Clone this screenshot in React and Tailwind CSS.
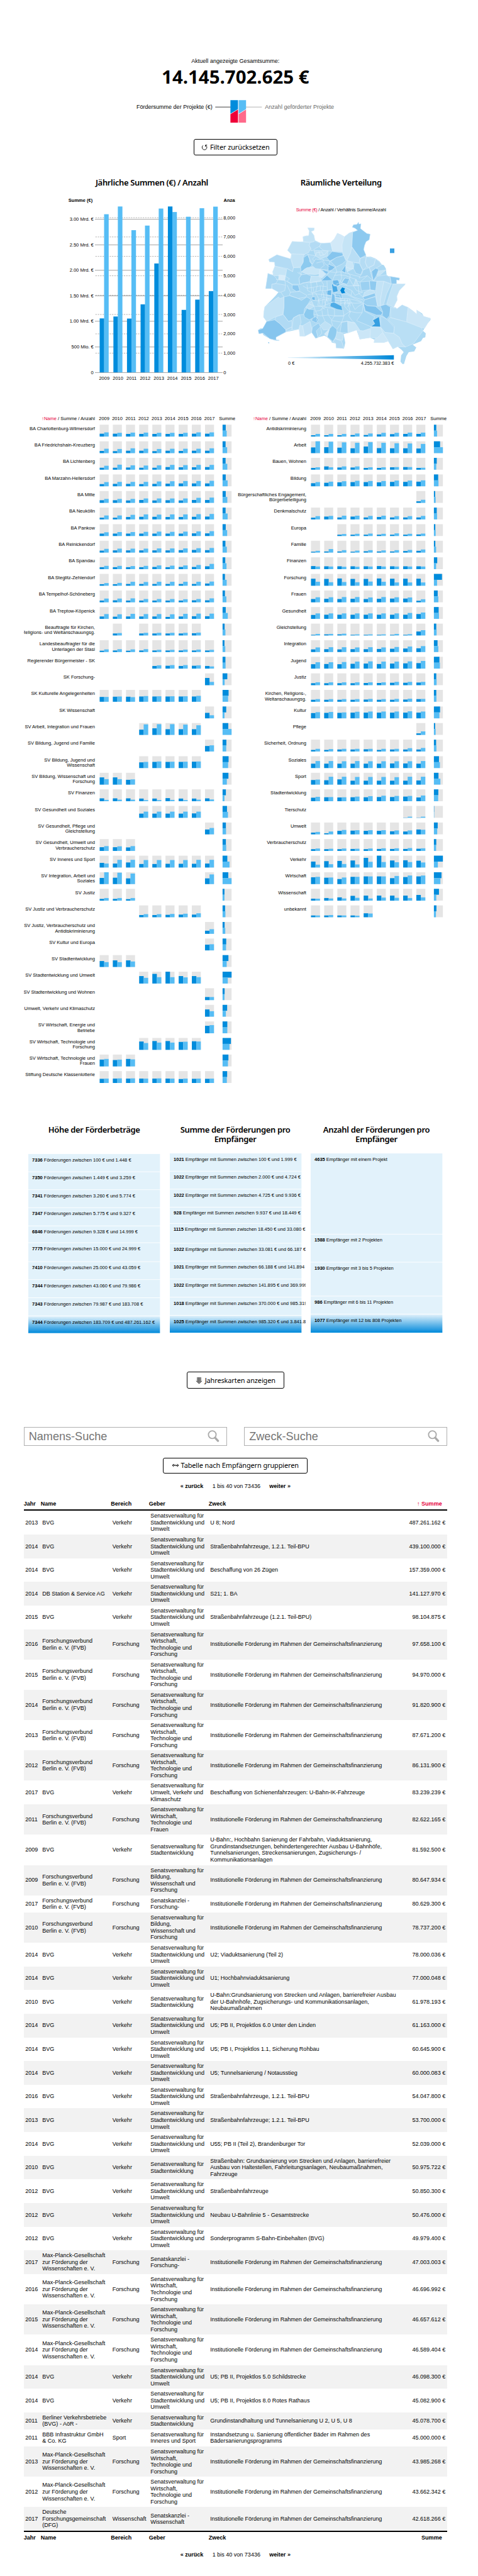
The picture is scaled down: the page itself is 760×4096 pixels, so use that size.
import React from "react";

const YEARS = [2009, 2010, 2011, 2012, 2013, 2014, 2015, 2016, 2017];

/* label (| = line break) ; nine yearly cells "sum,count" (- = none) ; totals */
const GIVERS = `BA Charlottenburg-Wilmersdorf;13,19 13,17 12,18 12,18 12,17 12,17 12,17 13,19 13,19;20,26
BA Friedrichshain-Kreuzberg;10,20 9,19 11,22 11,20 9,19 11,20 10,20 11,20 11,22;19,29
BA Lichtenberg;9,18 9,23 10,20 9,19 9,20 12,22 11,21 11,22 12,22;19,30
BA Marzahn-Hellersdorf;10,19 11,20 11,20 10,20 11,22 12,23 13,24 13,24 13,25;20,32
BA Mitte;12,18 12,18 11,18 13,20 11,20 12,20 11,20 13,23 13,24;20,30
BA Neukölln;8,18 8,18 11,21 12,23 12,22 11,23 11,23 12,24 13,25;19,32
BA Pankow;11,17 11,18 11,18 11,19 11,20 11,19 11,20 12,21 12,22;20,29
BA Reinickendorf;9,17 10,18 10,18 10,18 10,19 10,19 11,19 12,20 11,21;18,27
BA Spandau;9,15 9,15 9,14 9,15 10,17 9,16 10,17 10,19 13,24;17,25
BA Steglitz-Zehlendorf;7,12 7,13 8,18 8,17 8,18 8,18 8,18 8,18 10,19;15,26
BA Tempelhof-Schöneberg;8,17 9,17 8,18 8,15 8,15 8,15 8,14 9,15 9,18;15,24
BA Treptow-Köpenick;11,22 10,21 11,23 11,22 11,22 9,21 11,23 12,24 12,24;20,33
Beauftragte für Kirchen,|Religions- und Weltanschauungsg.;- 9,11 - 9,12 9,12 9,12 9,12 10,13 -;13,18
Landesbeauftragter für die|Unterlagen der Stasi;6,12 7,13 6,12 7,13 7,10 7,10 7,11 7,11 7,10;12,17
Regierender Bürgermeister - SK;- - - - 12,15 13,16 12,16 13,15 12,10;18,19
SK Forschung-;- - - - - - - - 33,15;30,13
SK Kulturelle Angelegenheiten;22,22 23,24 23,21 24,26 24,25 24,25 24,25 24,27 -;38,35
SK Wissenschaft;- - - - - - - - 25,14;23,12
SV Arbeit, Integration und Frauen;- - - 24,48 30,49 26,49 26,47 26,44 -;36,57
SV Bildung, Jugend und Familie;- - - - - - - - 25,28;24,23
SV Bildung, Jugend und|Wissenschaft;- - - 26,28 28,30 28,29 28,29 29,30 -;38,35
SV Bildung, Wissenschaft und|Forschung;33,25 33,25 22,24 - - - - - -;37,27
SV Finanzen;13,6 13,7 13,7 12,5 12,5 14,6 12,5 12,7 13,8;21,12
SV Gesundheit und Soziales;- - - 19,28 19,28 19,28 19,28 20,28 -;28,34
SV Gesundheit, Pflege und|Gleichstellung;- - - - - - - - 22,29;21,22
SV Gesundheit, Umwelt und|Verbraucherschutz;17,22 17,21 16,22 - - - - - -;21,23
SV Inneres und Sport;21,18 18,35 23,35 16,34 16,34 17,34 17,34 17,35 18,35;30,44
SV Integration, Arbeit und|Soziales;28,54 29,52 26,48 - - - - - 26,44;36,57
SV Justiz;8,12 8,12 7,12 - - - - - -;12,12
SV Justiz und Verbraucherschutz;- - - 10,14 10,14 11,15 12,16 12,18 -;16,18
SV Justiz, Verbraucherschutz und|Antidiskriminierung;- - - - - - - - 14,21;13,17
SV Kultur und Europa;- - - - - - - - 26,28;23,22
SV Stadtentwicklung;27,22 30,22 30,25 - - - - - -;37,26
SV Stadtentwicklung und Umwelt;- - - 34,26 44,29 54,29 34,28 34,29 -;57,33
SV Stadtentwicklung und Wohnen;- - - - - - - - 14,14;13,12
Umwelt, Verkehr und Klimaschutz;- - - - - - - - 33,25;29,21
SV Wirtschaft, Energie und|Betriebe;- - - - - - - - 34,37;30,30
SV Wirtschaft, Technologie und|Forschung;- - - 38,31 40,33 40,33 36,37 39,38 -;53,44
SV Wirtschaft, Technologie und|Frauen;31,34 29,31 34,32 - - - - - -;37,34
Stiftung Deutsche Klassenlotterie;19,20 20,21 20,21 20,20 20,21 20,20 18,20 19,20 19,20;29,27`;

const AREAS = `Antidiskriminierung;6,12 6,12 6,12 7,14 7,14 10,17 11,17 12,18 12,18;15,20
Arbeit;26,54 27,52 25,49 22,47 30,50 23,47 22,45 22,44 21,42;39,57
Bauen, Wohnen;8,11 15,11 10,15 10,15 8,11 8,11 11,12 12,12 8,9;18,15
Bildung;14,19 16,21 18,23 19,25 19,24 18,24 20,26 20,26 21,27;27,29
Bürgerschaftliches Engagement,|Bürgerbeteiligung;- - - - - - - - 7,14;8,11
Denkmalschutz;8,15 13,16 9,17 13,17 9,16 11,17 9,15 9,15 9,16;18,20
Europa;- - 6,9 6,10 6,11 6,10 6,12 6,10 7,11;9,11
Familie;4,8 5,16 5,11 4,9 6,11 5,10 5,11 7,12 8,14;9,14
Finanzen;14,12 13,12 13,11 13,11 13,12 14,12 13,12 13,12 13,12;21,14
Forschung;32,18 31,16 33,17 31,16 31,19 33,18 32,15 32,15 32,15;51,20
Frauen;15,23 16,23 15,24 16,24 15,22 16,24 17,23 17,22 7,14;24,28
Gesundheit;18,25 19,25 19,25 19,25 19,25 19,25 19,25 19,27 22,29;30,32
Gleichstellung;3,7 5,7 5,8 3,5 3,5 3,5 3,7 3,6 18,24;15,17
Integration;12,21 13,22 12,22 13,21 13,22 14,21 15,23 16,25 17,27;23,28
Jugend;20,29 21,29 20,30 22,32 23,33 21,32 23,32 24,33 25,35;35,38
Justiz;9,13 9,13 9,13 9,13 10,13 10,13 11,15 11,15 12,15;15,17
Kirchen, Religions-,|Weltanschauungsg.;9,12 9,12 9,12 9,12 10,13 9,12 9,13 10,14 12,13;15,16
Kultur;24,28 25,29 25,27 26,30 26,31 26,31 26,31 26,32 26,31;39,35
Pflege;- - - - - - - - 7,16;8,11
Sicherheit, Ordnung;7,12 7,11 9,12 9,12 10,12 7,12 9,12 9,15 9,16;14,16
Soziales;20,32 20,32 20,31 20,32 20,31 20,31 21,31 21,31 20,32;32,38
Sport;21,23 20,36 24,36 18,35 18,35 18,35 18,34 18,36 19,36;29,41
Stadtentwicklung;16,20 18,19 17,18 18,21 18,23 19,25 19,24 21,24 17,26;28,27
Tierschutz;- - - - - - - 1,5 1,5;2,2
Umwelt;8,11 5,13 16,20 17,19 16,19 16,19 14,18 13,18 22,21;24,21
Verbraucherschutz;8,11 8,10 8,11 9,10 8,11 9,12 9,12 9,13 10,12;15,14
Verkehr;27,13 29,15 30,16 32,14 44,26 54,25 32,24 33,25 31,23;57,25
Wirtschaft;31,33 29,30 23,30 33,33 35,35 35,35 27,37 32,39 35,39;48,41
Wissenschaft;9,9 12,10 15,10 22,13 23,10 23,14 23,13 23,12 26,15;32,15
unbekannt;8,8 8,10 8,8 8,7 18,17 - - - -;16,13`;

function Matrix({ data, left, labelX }) {
  const boxX = labelX + 10;
  const sumX = boxX + 259.5;
  return (
    <svg className="block h-[1069px] w-[336.6px]" viewBox={`${left} 870 447 1420`} preserveAspectRatio="xMinYMin slice" fontFamily="Liberation Sans, Arial, sans-serif" fontSize="10">
      <text x={labelX} y="887" textAnchor="end">
        <tspan fill="#e6003c">↑Name</tspan> / Summe / Anzahl
      </text>
      {YEARS.map((y, i) => (
        <text key={y} x={boxX + 9.5 + i * 27.8} y="887" textAnchor="middle">{y}</text>
      ))}
      <text x={sumX + 9.7} y="887" textAnchor="middle">Summe</text>
      {data.split("\n").map((line, r) => {
        const [label, cells, total] = line.split(";");
        const top = 897 + r * 35;
        const [a, b] = total.split(",").map(Number);
        return (
          <g key={label}>
            {label.split("|").map((t, k) => (
              <text key={t} x={labelX} y={top + 11 + k * 11} textAnchor="end">{t}</text>
            ))}
            {cells.split(" ").map((c, i) => {
              if (c === "-") return null;
              const [d, l] = c.split(",").map((v) => (Number(v) / 54) * 25);
              const x = boxX + i * 27.8;
              return (
                <g key={i}>
                  <rect x={x} y={top} width="19" height="25" fill="#e5e5e5" />
                  <rect x={x} y={top + 25 - d} width="9.5" height={d} fill="#008cdc" />
                  <rect x={x + 9.5} y={top + 25 - l} width="9.5" height={l} fill="#56bdf5" />
                </g>
              );
            })}
            <rect x={sumX} y={top} width="19" height="25" fill="#e5e5e5" />
            <rect x={sumX} y={top} width={a / 3} height="12.5" fill="#008cdc" />
            <rect x={sumX} y={top + 12.5} width={b / 3} height="12.5" fill="#56bdf5" />
          </g>
        );
      })}
    </svg>
  );
}

const SUM_TICKS = [["3.00 Mrd. €", 188], ["2.50 Mrd. €", 350], ["2.00 Mrd. €", 511], ["1.50 Mrd. €", 673], ["1.00 Mrd. €", 834], ["500 Mio. €", 997], ["0", 1159]];
const COUNT_TICKS = [["8,000", 178], ["7,000", 300], ["6,000", 423], ["5,000", 546], ["4,000", 669], ["3,000", 791], ["2,000", 914], ["1,000", 1036], ["0", 1159]];
const BARS = [[330, 816, 156], [417, 804, 107], [503, 817, 257], [589, 727, 228], [676, 468, 120], [762, 107, 142], [849, 762, 172], [935, 697, 118], [1021, 643, 108]];

function YearChart() {
  return (
    <svg className="block h-[346.4px] w-[336.6px]" viewBox="-150 30 1341 1380" preserveAspectRatio="xMinYMin slice" fontFamily="Liberation Sans, Arial, sans-serif" fontSize="30">
      <text x="132" y="77" fontWeight="bold">Summe (€)</text>
      <text x="1115" y="77" fontWeight="bold">Anzahl</text>
      {SUM_TICKS.map(([t, y]) => (
        <g key={t}>
          <line x1="300" x2="1109" y1={y} y2={y} stroke="#999" strokeWidth="3.6" />
          <text x="291" y={y + 10} textAnchor="end">{t}</text>
        </g>
      ))}
      {COUNT_TICKS.map(([t, y]) => (
        <g key={t}>
          {t !== "0" && <line x1="303" x2="1106" y1={y} y2={y} stroke="#999" strokeWidth="3" strokeDasharray="9 6" />}
          <text x="1114" y={y + 10}>{t}</text>
        </g>
      ))}
      {BARS.map(([x, d, l], i) => (
        <g key={x}>
          <rect x={x} y={d} width="29" height={1158 - d} fill="#008cdc" />
          <rect x={x + 28} y={l} width="29" height={1158 - l} fill="#56bdf5" />
          <text x={x + 29} y="1206" textAnchor="middle">{YEARS[i]}</text>
        </g>
      ))}
    </svg>
  );
}

const OUTLINE = "262,385 292,328 330,332 362,330 360,298 380,292 396,292 400,262 390,242 432,243 430,258 412,266 430,290 436,322 470,338 500,342 545,336 560,310 578,276 600,285 622,298 625,310 640,305 652,275 672,268 706,258 690,245 672,238 680,222 702,220 712,205 714,218 728,216 724,246 740,262 765,278 786,282 780,318 760,330 750,355 745,380 750,400 762,425 790,425 820,436 845,455 860,475 872,478 885,500 890,540 900,548 930,552 972,560 970,575 953,572 953,597 1008,597 1005,604 985,620 970,640 955,675 957,700 945,720 935,745 950,748 955,755 988,730 1026,746 1060,770 1080,788 1085,780 1080,762 1100,775 1115,785 1125,803 1168,815 1168,825 1150,848 1130,880 1120,895 1138,910 1135,935 1120,940 1108,960 1055,982 1078,1000 1065,1025 1030,1030 1015,1055 1000,1105 990,1105 978,1090 982,1050 998,1030 985,1015 960,995 930,1010 900,960 870,970 810,970 812,950 785,938 720,948 700,890 645,908 618,915 628,970 620,1007 570,1003 568,975 542,968 540,960 510,932 495,925 440,942 415,905 370,930 340,928 338,885 252,902 190,935 190,950 210,953 208,958 180,955 150,945 108,920 107,910 98,906 90,915 80,912 76,890 90,880 105,880 120,855 130,835 110,808 113,770 118,742 160,700 190,668 205,650 165,628 123,628 138,530 146,534 170,540 168,520 182,485 180,460 160,450 148,458 143,442 195,412 240,430 282,438 286,408";

const DISTRICTS = [
  ["#c3e3f6", "362,330 360,298 396,292 400,262 390,242 432,243 430,258 412,266 430,290 436,322 420,334"],
  ["#bfe1f5", "262,385 292,328 368,332 405,336 400,355 410,372 395,400 370,410 320,410 286,408"],
  ["#b3dbf4", "405,336 436,328 475,340 465,360 440,372 425,385 410,388 410,372 400,355"],
  ["#b5dcf4", "475,340 535,336 548,390 520,388 490,385 470,370 465,360"],
  ["#d2e9f8", "535,336 560,310 578,276 622,298 615,320 608,350 610,395 548,390"],
  ["#c5e4f6", "622,298 652,275 675,268 676,365 662,400 638,450 620,430 610,395 608,350"],
  ["#8dc9ef", "675,270 706,258 690,245 672,238 680,222 702,220 712,205 714,218 728,216 724,246 765,278 786,282 780,318 760,330 750,355 745,380 760,415 722,435 670,362"],
  ["#b9def5", "668,365 722,435 715,465 680,460 638,450 662,400"],
  ["#c3e3f6", "286,408 370,410 358,435 360,460 350,490 300,495 290,470"],
  ["#8ccaef", "390,412 402,440 402,455 420,478 400,495 372,502 345,530 345,490 362,460 365,430"],
  ["#b3dbf4", "143,442 195,412 282,438 300,495 295,520 260,500 182,485 180,460 148,458"],
  ["#c5e4f6", "182,485 255,505 255,535 240,548 175,545 168,520"],
  ["#a9d7f3", "138,530 175,545 190,560 200,575 188,595 165,600 160,628 123,628"],
  ["#d8ecf9", "208,540 250,545 245,575 205,570"],
  ["#a9d8f3", "258,500 295,520 300,495 345,495 350,540 335,560 340,600 290,600 260,580 275,565 250,550"],
  ["#b3dbf4", "162,600 190,595 250,605 245,640 220,650 205,650 165,628"],
  ["#8cc8ef", "292,605 330,605 340,640 318,645 292,628"],
  ["#abd8f3", "280,650 340,645 385,670 375,682 330,690 275,670"],
  ["#99d0f1", "240,680 275,672 330,690 350,702 385,680 410,695 392,725 370,755 365,790 330,795 300,812 290,828 268,835 235,790 240,740"],
  ["#c3e3f6", "118,742 205,680 215,690 240,680 240,740 232,790 190,805 130,835 110,808 113,770"],
  ["#86c5ee", "130,835 182,825 215,850 252,888 252,902 190,935 190,950 208,958 150,945 107,910 80,912 76,890 105,880"],
  ["#b0daf4", "190,805 235,792 268,835 290,830 290,870 252,888 215,850 182,825"],
  ["#b3dcf4", "300,812 340,792 348,840 335,885 290,888"],
  ["#b3dcf4", "252,888 290,870 290,888 252,900"],
  ["#cae6f7", "340,860 358,862 370,928 340,928 335,885"],
  ["#c0e1f6", "358,862 405,835 418,890 410,910 370,930"],
  ["#8ccaef", "385,750 400,758 430,760 428,790 432,810 400,825 370,808 365,790"],
  ["#8cc8ef", "420,815 440,805 458,822 445,845 415,830"],
  ["#c9e6f7", "350,520 385,495 430,488 470,500 478,530 440,538 385,535"],
  ["#cfe8f8", "468,505 505,535 480,560 460,550"],
  ["#b0daf4", "390,410 440,420 420,440 445,465 415,470 402,440"],
  ["#bfe1f5", "430,385 520,388 515,420 470,440 440,420"],
  ["#a5d5f2", "440,440 530,452 520,510 440,500 415,480"],
  ["#9fd2f1", "350,540 385,535 412,548 405,580 340,600 335,560"],
  ["#c3e3f6", "412,548 460,550 475,565 470,582 405,590"],
  ["#85c4ee", "478,505 522,520 512,535 500,530"],
  ["#80c2ed", "520,472 565,490 548,510 520,515"],
  ["#86c5ee", "510,430 545,392 610,402 615,418 570,432 530,452"],
  ["#9fd2f1", "535,455 570,430 618,418 632,450 610,470 570,490"],
  ["#c9e6f7", "638,450 675,462 680,500 640,520 632,490"],
  ["#9fd2f1", "685,462 718,468 738,510 725,540 695,530 680,500"],
  ["#7cc0ec", "630,478 630,530 605,515"],
  ["#78beec", "512,542 548,575 474,578"],
  ["#b5dcf4", "722,435 762,425 755,460 765,490 740,510 720,470"],
  ["#b9def5", "762,425 820,438 810,478 770,495 755,460"],
  ["#b5dcf4", "820,438 860,475 790,520 780,495 810,478"],
  ["#a5d5f2", "740,510 780,495 802,575 768,545 715,560 735,530"],
  ["#86c5ee", "795,518 820,498 840,505 825,545 805,578"],
  ["#c5e4f6", "840,515 885,510 850,540 830,545"],
  ["#b0daf4", "885,540 912,555 920,597 872,580 808,580 830,550"],
  ["#8fcaef", "912,550 972,560 970,575 953,572 953,597 920,597"],
  ["#8fcaef", "782,578 828,582 825,640 785,635"],
  ["#9bd0f1", "722,585 780,580 785,635 730,640"],
  ["#c0e2f6", "750,650 785,635 812,642 815,655 740,680"],
  ["#8fcaef", "740,680 815,655 820,675 750,698"],
  ["#9bd0f1", "750,698 820,678 832,740 820,740 765,735 742,718"],
  ["#c3e3f6", "828,582 872,582 862,640 850,700 855,735 835,740 825,690 820,640"],
  ["#bfe1f5", "872,582 918,600 890,660 870,730 852,735 850,700"],
  ["#c3e3f6", "930,600 1008,597 1005,604 970,640 955,675 957,700 935,745 890,725 910,660"],
  ["#80c2ed", "742,718 765,735 820,740 865,780 855,795 825,795 755,768"],
  ["#8ac7ee", "850,737 885,727 915,745 908,800 890,820 862,797 865,775"],
  ["#a5d6f3", "742,722 750,770 815,805 802,828 815,850 790,868 700,830 735,780"],
  ["#369fe1", "802,828 820,818 842,805 852,870 790,868 815,850"],
  ["#b0daf4", "852,800 890,820 940,875 935,910 880,905 852,870"],
  ["#b9def5", "915,745 955,755 988,730 1026,746 1015,838 915,810"],
  ["#cbe6f7", "1026,746 1080,788 1080,762 1125,803 1168,815 1130,880 1110,875 1018,838"],
  ["#b9dff5", "910,810 1015,838 1110,875 1120,895 1060,975 1010,997 985,975 970,935 935,910 940,865 900,825"],
  ["#c3e3f6", "850,872 880,905 935,912 970,935 990,980 1010,997 960,995 930,1010 900,960 865,905"],
  ["#cde7f7", "810,970 812,950 865,905 900,960 870,970"],
  ["#cbe6f7", "705,890 740,895 785,880 785,938 720,948"],
  ["#c5e4f6", "790,870 850,872 865,905 830,940 785,938"],
  ["#c9e6f7", "645,835 690,845 720,890 700,890 645,908"],
  ["#8fcbef", "512,932 530,880 548,862 575,885 575,920 550,962"],
  ["#bfe1f5", "575,900 618,915 610,955 565,945"],
  ["#b5dcf4", "550,962 565,945 605,960 620,1007 570,1003 568,975"],
  ["#a5d5f2", "605,840 642,832 645,908 595,905"],
  ["#9bd0f1", "415,905 420,870 460,845 470,870 445,895 455,938 440,942"],
  ["#d5ebf9", "495,915 525,885 515,932"],
  ["#bfe1f5", "470,860 500,835 540,860 525,885 490,890"],
  ["#bfe1f5", "390,730 415,705 430,740 400,758 378,745"],
  ["#4aa9e5", "542,600 550,598 555,610 575,612 582,645 550,652"],
  ["#68b7e9", "508,640 540,635 540,672 510,665"],
  ["#0088d8", "595,638 608,618 628,625 622,640 630,655 605,660"],
  ["#50ace6", "535,720 555,712 605,738 610,765 575,758 532,740"],
  ["#7cc0ec", "545,655 562,670 565,715 538,712"],
  ["#6db9ea", "548,575 580,572 598,600 580,612 550,598"],
  ["#74bceb", "415,682 435,678 438,700 420,700"],
  ["#bfe1f5", "695,568 715,610 680,608"],
  ["#8ac8ef", "625,560 655,565 640,600 605,590"],
  ["#8fcaef", "565,655 605,660 610,690 565,682"],
];

const STREETS = [
  "345,600 360,590 405,590 440,582 475,578 512,542 530,520 565,490", "385,600 390,640 420,655 465,640 505,640 545,632",
  "410,590 415,640 425,680", "445,582 450,610 440,650", "475,578 490,600 485,640 475,680", "512,580 515,640 510,690 500,730",
  "360,610 385,625 420,620 470,610 510,615", "390,665 430,660 480,665 540,672", "420,700 455,705 500,695 540,690",
  "440,655 460,690 455,735 480,740 530,720", "455,700 490,680 525,690", "485,690 480,740 500,760", "400,725 440,740 480,740",
  "430,740 440,770 470,765 500,745 535,750 560,758 560,800 540,830", "460,700 470,735", "490,650 495,720", "505,690 520,715",
  "430,790 470,800 520,795 560,800 615,800 660,770", "440,770 455,800 445,830", "515,755 520,795 545,830 605,840 645,835 690,845",
  "615,765 620,800 605,840", "480,765 485,800 500,835", "565,715 600,720 640,715 690,720 740,718",
  "565,683 600,690 640,690 690,700 730,715", "600,660 640,665 690,690 735,712", "630,650 680,680 742,700",
  "630,620 670,640 690,670 735,650", "600,600 640,610 680,610 722,610", "655,565 680,610 700,640 740,650",
  "548,575 560,545 590,540 630,545 670,560 700,570", "530,520 560,525 600,520 640,530 690,545 720,550",
  "565,490 575,520 560,545", "600,520 605,560 590,600", "640,520 660,545 655,565", "632,490 660,500 680,500",
  "585,570 605,590 625,560", "600,690 600,735", "625,690 625,740 650,770 700,780 735,780", "595,700 655,705 660,740",
  "640,690 650,740 660,780", "640,700 620,725 660,720 640,745", "650,690 670,720 690,760 710,740 742,722",
  "670,640 665,670", "710,615 715,660 740,680", "690,575 722,585 768,545", "660,770 650,800 670,830 690,845",
  "500,740 505,700 540,700", "470,610 470,640", "425,620 430,655", "560,800 620,800", "445,465 485,455 495,480 470,500",
  "460,390 470,420 500,410 515,390", "440,420 445,400 480,395 490,415", "485,440 500,470 530,490",
  "560,670 590,668 600,690", "565,700 595,705 625,700", "580,612 595,605 590,590 570,600", "600,605 610,595 630,600 640,610",
  "325,525 350,540 335,520", "245,575 290,600 292,605", "190,570 245,575 250,605", "220,650 240,680", "260,605 280,650",
  "470,765 490,740 510,745", "470,870 480,910 455,938", "548,862 540,830", "575,885 605,840",
];

function BerlinMap() {
  return (
    <svg className="block h-[346.4px] w-[336.6px]" viewBox="-69 30 1341 1380" preserveAspectRatio="xMinYMin slice" fontFamily="Liberation Sans, Arial, sans-serif" fontSize="29">
      <defs>
        <linearGradient id="scale">
          <stop offset="0" stopColor="#e2f2fb" />
          <stop offset="1" stopColor="#0088d8" />
        </linearGradient>
      </defs>
      <text x="316" y="138" textLength="571">
        <tspan fill="#e6003c">Summe (€)</tspan> / Anzahl / Verhältnis Summe/Anzahl
      </text>
      <polygon points={OUTLINE} fill="#acd9f3" />
      <g stroke="#e0f1fb" strokeWidth="2.2" strokeLinejoin="round">
        {DISTRICTS.map(([c, p]) => <polygon key={p} points={p} fill={c} />)}
        {STREETS.map((p) => <polyline key={p} points={p} fill="none" />)}
      </g>
      <polygon points="138,968 146,966 146,976" fill="#86c5ee" />
      <rect x="911" y="373" width="28" height="29" fill="#389fe1" />
      <polygon points="265,1063 936,1049 936,1077 265,1066" fill="url(#scale)" />
      <text x="266" y="1110">0 €</text>
      <text x="936" y="1110" textAnchor="end">4.255.732.383 €</text>
    </svg>
  );
}

const STACKS = [
  {
    title: ["Höhe der Förderbeträge"],
    tops: [243, 338, 434, 530, 627, 717, 818, 914, 1011, 1108],
    end: 1201,
    rows: [["7336", "Förderungen zwischen 100 € und 1.448 €"], ["7350", "Förderungen zwischen 1.449 € und 3.259 €"], ["7341", "Förderungen zwischen 3.260 € und 5.774 €"], ["7347", "Förderungen zwischen 5.775 € und 9.327 €"], ["6846", "Förderungen zwischen 9.328 € und 14.999 €"], ["7775", "Förderungen zwischen 15.000 € und 24.999 €"], ["7410", "Förderungen zwischen 25.000 € und 43.059 €"], ["7344", "Förderungen zwischen 43.060 € und 79.986 €"], ["7343", "Förderungen zwischen 79.987 € und 183.708 €"], ["7344", "Förderungen zwischen 183.709 € und 487.261.162 €"]],
  },
  {
    title: ["Summe der Förderungen pro", "Empfänger"],
    tops: [240, 335, 431, 527, 614, 720, 815, 911, 1008, 1105],
    end: 1199,
    rows: [["1021", "Empfänger mit Summen zwischen 100 € und 1.999 €"], ["1022", "Empfänger mit Summen zwischen 2.000 € und 4.724 €"], ["1022", "Empfänger mit Summen zwischen 4.725 € und 9.936 €"], ["928", "Empfänger mit Summen zwischen 9.937 € und 18.449 €"], ["1115", "Empfänger mit Summen zwischen 18.450 € und 33.080 €"], ["1022", "Empfänger mit Summen zwischen 33.081 € und 66.187 €"], ["1021", "Empfänger mit Summen zwischen 66.188 € und 141.894 €"], ["1022", "Empfänger mit Summen zwischen 141.895 € und 369.999 €"], ["1018", "Empfänger mit Summen zwischen 370.000 € und 985.319 €"], ["1025", "Empfänger mit Summen zwischen 985.320 € und 3.841.800.000 €"]],
  },
  {
    title: ["Anzahl der Förderungen pro", "Empfänger"],
    tops: [240, 671, 821, 1002, 1098],
    end: 1199,
    rows: [["4635", "Empfänger mit einem Projekt"], ["1588", "Empfänger mit 2 Projekten"], ["1930", "Empfänger mit 3 bis 5 Projekten"], ["986", "Empfänger mit 6 bis 11 Projekten"], ["1077", "Empfänger mit 12 bis 808 Projekten"]],
  },
];

function Stack({ title, tops, end, rows, id }) {
  const k = 2.529;
  const ys = [...tops, end].map((t) => (t - 230) / k);
  return (
    <div className="w-[224.4px]">
      <h2 className="h-[42px] w-[209px] text-center font-['Noto_Sans',sans-serif] text-[13px] leading-[14.4px] font-semibold tracking-[-0.35px]">
        {title.map((t) => <span key={t} className="block">{t}</span>)}
      </h2>
      <svg className="block h-[301px] w-[216.9px]" viewBox="0 0 288 400" preserveAspectRatio="xMinYMin slice" fontFamily="Liberation Sans, Arial, sans-serif" fontSize="10">
        <defs>
          <linearGradient id={id} x1="0" y1="0" x2="0" y2="1">
            <stop offset="0" stopColor="#e2f2fb" />
            <stop offset="0.9" stopColor="#1793de" />
            <stop offset="1" stopColor="#008cdc" />
          </linearGradient>
        </defs>
        {rows.map(([n, t], i) => (
          <g key={i}>
            <rect x="0" y={ys[i] + (i ? 0.6 : 0)} width="278" height={ys[i + 1] - ys[i] - (i ? 1.2 : 0.6)} fill={i === rows.length - 1 ? `url(#${id})` : "#e2f2fb"} />
            <text x="8" y={ys[i] + 16}><tspan fontWeight="bold">{n}</tspan> {t}</text>
          </g>
        ))}
      </svg>
    </div>
  );
}

const SU = "Senatsverwaltung für|Stadtentwicklung und|Umwelt";
const ST = "Senatsverwaltung für|Stadtentwicklung";
const WTF = "Senatsverwaltung für|Wirtschaft,|Technologie und|Forschung";
const BWF = "Senatsverwaltung für|Bildung,|Wissenschaft und|Forschung";
const SKF = "Senatskanzlei -|Forschung-";
const FVB = "Forschungsverbund|Berlin e. V. (FVB)";
const MPG = "Max-Planck-Gesellschaft|zur Förderung der|Wissenschaften e. V.";
const INST = "Institutionelle Förderung im Rahmen der Gemeinschaftsfinanzierung";
const V = "Verkehr";
const F = "Forschung";

const GRANTS = [
  [2013, "BVG", V, SU, "U 8; Nord", "487.261.162"],
  [2014, "BVG", V, SU, "Straßenbahnfahrzeuge, 1.2.1. Teil-BPU", "439.100.000"],
  [2014, "BVG", V, SU, "Beschaffung von 26 Zügen", "157.359.000"],
  [2014, "DB Station & Service AG", V, SU, "S21; 1. BA", "141.127.970"],
  [2015, "BVG", V, SU, "Straßenbahnfahrzeuge (1.2.1. Teil-BPU)", "98.104.875"],
  [2016, FVB, F, WTF, INST, "97.658.100"],
  [2015, FVB, F, WTF, INST, "94.970.000"],
  [2014, FVB, F, WTF, INST, "91.820.900"],
  [2013, FVB, F, WTF, INST, "87.671.200"],
  [2012, FVB, F, WTF, INST, "86.131.900"],
  [2017, "BVG", V, "Senatsverwaltung für|Umwelt, Verkehr und|Klimaschutz", "Beschaffung von Schienenfahrzeugen: U-Bahn-IK-Fahrzeuge", "83.239.239"],
  [2011, FVB, F, "Senatsverwaltung für|Wirtschaft,|Technologie und|Frauen", INST, "82.622.165"],
  [2009, "BVG", V, ST, "U-Bahn:, Hochbahn Sanierung der Fahrbahn, Viaduktsanierung,|Grundinstandsetzungen, behindertengerechter Ausbau U-Bahnhöfe,|Tunnelsanierungen, Streckensanierungen, Zugsicherungs- /|Kommunikationsanlagen", "81.592.500"],
  [2009, FVB, F, BWF, INST, "80.647.934"],
  [2017, FVB, F, SKF, INST, "80.629.300"],
  [2010, FVB, F, BWF, INST, "78.737.200"],
  [2014, "BVG", V, SU, "U2; Viaduktsanierung (Teil 2)", "78.000.036"],
  [2014, "BVG", V, SU, "U1; Hochbahnviaduktsanierung", "77.000.048"],
  [2010, "BVG", V, ST, "U-Bahn:Grundsanierung von Strecken und Anlagen, barrierefreier Ausbau|der U-Bahnhöfe, Zugsicherungs- und Kommunikationsanlagen,|Neubaumaßnahmen", "61.978.193"],
  [2014, "BVG", V, SU, "U5; PB II, Projektlos 6.0 Unter den Linden", "61.163.000"],
  [2014, "BVG", V, SU, "U5; PB I, Projektlos 1.1, Sicherung Rohbau", "60.645.900"],
  [2014, "BVG", V, SU, "U5; Tunnelsanierung / Notausstieg", "60.000.083"],
  [2016, "BVG", V, SU, "Straßenbahnfahrzeuge, 1.2.1. Teil-BPU", "54.047.800"],
  [2013, "BVG", V, SU, "Straßenbahnfahrzeuge; 1.2.1. Teil-BPU", "53.700.000"],
  [2014, "BVG", V, SU, "U55; PB II (Teil 2), Brandenburger Tor", "52.039.000"],
  [2010, "BVG", V, ST, "Straßenbahn: Grundsanierung von Strecken und Anlagen, barrierefreier|Ausbau von Haltestellen, Fahrleitungsanlagen, Neubaumaßnahmen,|Fahrzeuge", "50.975.722"],
  [2012, "BVG", V, SU, "Straßenbahnfahrzeuge", "50.850.300"],
  [2012, "BVG", V, SU, "Neubau U-Bahnlinie 5 - Gesamtstrecke", "50.476.000"],
  [2012, "BVG", V, SU, "Sonderprogramm S-Bahn-Einbehalten (BVG)", "49.979.400"],
  [2017, MPG, F, SKF, INST, "47.003.003"],
  [2016, MPG, F, WTF, INST, "46.696.992"],
  [2015, MPG, F, WTF, INST, "46.657.612"],
  [2014, MPG, F, WTF, INST, "46.589.404"],
  [2014, "BVG", V, SU, "U5; PB II, Projektlos 5.0 Schildstrecke", "46.098.300"],
  [2014, "BVG", V, SU, "U5; PB II, Projektlos 8.0 Rotes Rathaus", "45.082.900"],
  [2011, "Berliner Verkehrsbetriebe|(BVG) - AöR -", V, ST, "Grundinstandhaltung und Tunnelsanierung U 2, U 5, U 8", "45.078.700"],
  [2011, "BBB Infrastruktur GmbH|& Co. KG", "Sport", "Senatsverwaltung für|Inneres und Sport", "Instandsetzung u. Sanierung öffentlicher Bäder im Rahmen des|Bädersanierungsprogramms", "45.000.000"],
  [2013, MPG, F, WTF, INST, "43.985.268"],
  [2012, MPG, F, WTF, INST, "43.662.342"],
  [2017, "Deutsche|Forschungsgemeinschaft|(DFG)", "Wissenschaft", "Senatskanzlei -|Wissenschaft", INST, "42.618.266"],
];

const COLS = "grid grid-cols-[27px_111.5px_60.5px_95px_300px_1fr]";

function Lines({ text }) {
  return (
    <div>
      {text.split("|").map((t) => <div key={t} className="whitespace-nowrap">{t}</div>)}
    </div>
  );
}

function HeadRow({ sorted }) {
  return (
    <div className={`${COLS} h-[19px] items-center font-bold whitespace-nowrap`}>
      <span>Jahr</span><span>Name</span><span>Bereich</span><span>Geber</span><span>Zweck</span>
      <span className={sorted ? "pr-[8.5px] text-right text-[#e6003c]" : "pr-[8.5px] text-right"}>
        {sorted && <span className="font-normal">↑ </span>}Summe
      </span>
    </div>
  );
}

function Pager() {
  return (
    <div className="flex h-[14px] items-center justify-center gap-[14.3px] text-[9.04px] leading-[14px]">
      <b>« zurück</b><span>1 bis 40 von 73436</span><b>weiter »</b>
    </div>
  );
}

function Button({ icon, children, size }) {
  return (
    <button className={`${size} mx-auto flex items-center justify-center gap-[4px] rounded-[3px] border border-black bg-white font-['Noto_Sans',sans-serif] text-[10.9px] leading-[14px] tracking-[-0.08px] whitespace-nowrap`}>
      {icon}<span>{children}</span>
    </button>
  );
}

function SearchBox({ label }) {
  return (
    <div className="flex h-[30px] w-[323px] items-center justify-between border border-[#b0b0b0] pr-[11px] pl-[7px]">
      <span className="text-[18.1px] leading-[20px] text-[#757575]">{label}</span>
      <svg className="h-[19px] w-[20px]" viewBox="0 0 25 25" fill="none" stroke="#aaa">
        <circle cx="10.5" cy="9.5" r="8" strokeWidth="2.4" />
        <path d="M16.5 16 L22.5 22.5" strokeWidth="4.4" strokeLinecap="round" />
      </svg>
    </div>
  );
}

export default function App() {
  return (
    <div className="h-[4096px] w-[760px] overflow-hidden bg-white font-['Liberation_Sans',Arial,sans-serif] text-black">
      <div className="flex w-[748.6px] flex-col">
        <header className="flex h-[308.7px] flex-col pt-[90px]">
          <p className="text-center text-[9.04px] leading-[14px]">Aktuell angezeigte Gesamtsumme:</p>
          <p className="h-[50px] pt-[3px] text-center font-['Open_Sans',sans-serif] text-[29.4px] leading-[30px] font-bold">14.145.702.625 €</p>
          <div className="flex h-[67.4px] items-start justify-center">
            <svg className="block h-[49px] w-[331.3px]" viewBox="278 205 440 65" fontFamily="Liberation Sans, Arial, sans-serif" fontSize="12">
              <text x="449" y="230.5" textAnchor="end">Fördersumme der Projekte (€)</text>
              <text x="560" y="230.5" fill="#666">Anzahl geförderter Projekte</text>
              <path d="M455 226.5H488" stroke="#000" />
              <path d="M519 226.5H553.5" stroke="#999" />
              <path d="M487 212H503V231L487 240.5Z" fill="#008cdc" />
              <path d="M504.5 212H520V231L504.5 240.5Z" fill="#56bdf5" />
              <path d="M487 241.5L503 232V259.5H487Z" fill="#ef0039" />
              <path d="M504.5 241.5L520 232V259.5H504.5Z" fill="#ff6a8b" />
            </svg>
          </div>
          <Button size="h-[25.4px] w-[132.6px]" icon={
            <svg className="h-[11px] w-[10px]" viewBox="0 0 14 14" fill="none" stroke="#000" strokeWidth="1.3">
              <path d="M4 2.5A5.3 5.3 0 1 0 10 2.3" />
              <path d="M9.2 5.5V1.7H13" />
            </svg>
          }>Filter zurücksetzen</Button>
          <div className="mt-[32px] flex pl-[37.7px] font-['Noto_Sans',sans-serif] text-[13px] leading-[22px] font-semibold tracking-[-0.35px]">
            <h2 className="w-[407.5px] text-center">Jährliche Summen (€) / Anzahl</h2>
            <h2 className="w-[194px] text-center">Räumliche Verteilung</h2>
          </div>
        </header>
        <section className="flex pl-[37.7px]">
          <YearChart />
          <BerlinMap />
        </section>
        <section className="flex h-[1069.3px] pl-[37.7px]">
          <Matrix data={GIVERS} left={50} labelX={200} />
          <Matrix data={AREAS} left={497} labelX={647} />
        </section>
        <section className="flex h-[456.9px] pt-[65px] pl-[45.2px]">
          {STACKS.map((s, i) => <Stack key={i} id={`stack${i}`} {...s} />)}
        </section>
        <Button size="h-[27px] w-[155.2px]" icon={
          <svg className="h-[12px] w-[11px]" viewBox="0 0 15 16" fill="none" stroke="#000" strokeWidth="1.2">
            <path d="M4 1V11M6.3 1V13M8.7 1V13M11 1V11M1.5 9L7.5 15L13.5 9" />
          </svg>
        }>Jahreskarten anzeigen</Button>
        <section className="flex justify-between pt-[60.4px] pr-[37.4px] pl-[37.7px]">
          <SearchBox label="Namens-Suche" />
          <SearchBox label="Zweck-Suche" />
        </section>
        <div className="pt-[19.2px]">
          <Button size="h-[25px] w-[230.4px]" icon={
            <svg className="h-[8px] w-[10px]" viewBox="0 0 14 8" fill="none" stroke="#000" strokeWidth="1.4">
              <path d="M0.5 4H3L4.5 2.5L6 5.5L8 2.5L9.5 5.5L11 4H13.5M3 1L0.5 4L3 7M11 1L13.5 4L11 7" />
            </svg>
          }>Tabelle nach Empfängern gruppieren</Button>
        </div>
        <div className="pt-[13px]"><Pager /></div>
        <section className="mr-[37.4px] ml-[37.7px] pt-[11.5px] text-[9.04px] leading-[10.54px]">
          <HeadRow sorted />
          <div className="border-y-2 border-black">
            {GRANTS.map(([year, name, area, giver, purpose, sum], i) => (
              <div key={i} className={`${COLS} items-center py-[3.01px] pl-[2.6px] ${i % 2 ? "bg-[#f2f2f2]" : "bg-white"}`}>
                <span>{year}</span>
                <Lines text={name} />
                <span>{area}</span>
                <Lines text={giver} />
                <Lines text={purpose} />
                <span className="pr-[3px] text-right whitespace-nowrap">{sum} €</span>
              </div>
            ))}
          </div>
          <HeadRow />
        </section>
        <div className="pt-[10px]"><Pager /></div>
      </div>
    </div>
  );
}
